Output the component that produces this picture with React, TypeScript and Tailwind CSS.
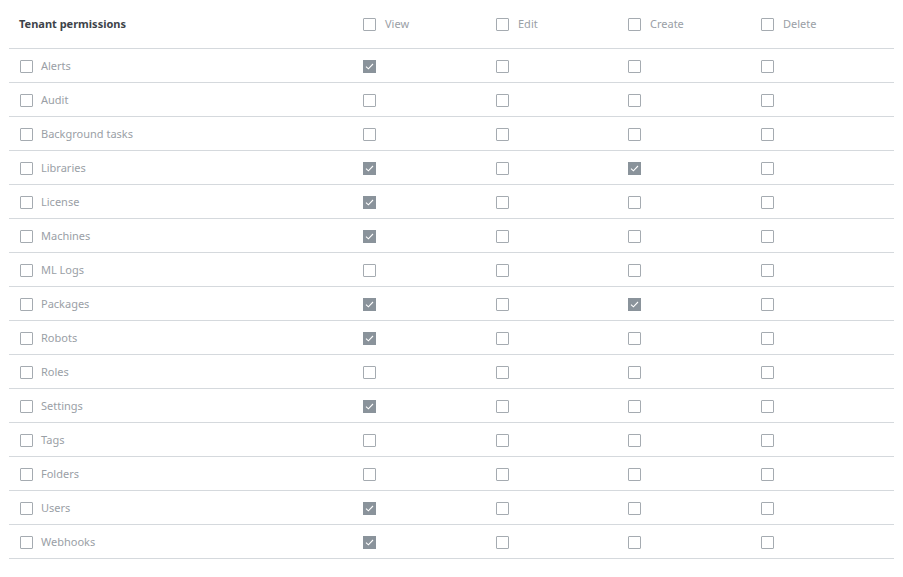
import React from "react";

interface Permission {
    name: string;
    view: boolean;
    edit: boolean;
    create: boolean;
    del: boolean;
}

const permissions: Permission[] = [
    { name: "Alerts", view: true, edit: false, create: false, del: false },
    { name: "Audit", view: false, edit: false, create: false, del: false },
    { name: "Background tasks", view: false, edit: false, create: false, del: false },
    { name: "Libraries", view: true, edit: false, create: true, del: false },
    { name: "License", view: true, edit: false, create: false, del: false },
    { name: "Machines", view: true, edit: false, create: false, del: false },
    { name: "ML Logs", view: false, edit: false, create: false, del: false },
    { name: "Packages", view: true, edit: false, create: true, del: false },
    { name: "Robots", view: true, edit: false, create: false, del: false },
    { name: "Roles", view: false, edit: false, create: false, del: false },
    { name: "Settings", view: true, edit: false, create: false, del: false },
    { name: "Tags", view: false, edit: false, create: false, del: false },
    { name: "Folders", view: false, edit: false, create: false, del: false },
    { name: "Users", view: true, edit: false, create: false, del: false },
    { name: "Webhooks", view: true, edit: false, create: false, del: false },
];

const Box = ({ checked }: { checked: boolean }) =>
    checked ? (
        <span className="flex h-[13px] w-[13px] items-center justify-center bg-[#8a939b]">
            <svg width="9" height="7" viewBox="0 0 9 7" fill="none">
                <path d="M1 3.6 L3.4 5.8 L8 1" stroke="#fff" strokeWidth="1.1" />
            </svg>
        </span>
    ) : (
        <span className="block h-[13px] w-[13px] rounded-[1px] border border-[#a5abb1] bg-white" />
    );

const cols = ["w-[133px]", "w-[132px]", "w-[133px]", "w-[132px]"];

export default function App() {
    return (
        <div
            className="min-h-[577px] w-[903px] bg-white pl-[9px] text-[11px]"
            style={{ fontFamily: '"Noto Sans", "Open Sans", sans-serif' }}
        >
            <div className="flex h-[48px] w-[885px] items-center">
                <div className="w-[345px] pl-[10px] font-bold text-[#3d4349]">Tenant permissions</div>
                {["View", "Edit", "Create", "Delete"].map((label, i) => (
                    <div key={label} className={`${cols[i]} flex items-center gap-[9px] pl-[9px] text-[#9aa0a6]`}>
                        <Box checked={false} />
                        <span>{label}</span>
                    </div>
                ))}
            </div>
            {permissions.map((p) => (
                <div key={p.name} className="flex h-[34px] w-[885px] items-center border-t border-[#d5d9dd] pt-[1px]">
                    <div className="flex w-[345px] items-center gap-[8px] pl-[11px] text-[#9aa0a6]">
                        <Box checked={false} />
                        <span>{p.name}</span>
                    </div>
                    {[p.view, p.edit, p.create, p.del].map((v, i) => (
                        <div key={i} className={`${cols[i]} pl-[9px]`}>
                            <Box checked={v} />
                        </div>
                    ))}
                </div>
            ))}
            <div className="w-[885px] border-t border-[#d5d9dd]" />
        </div>
    );
}
